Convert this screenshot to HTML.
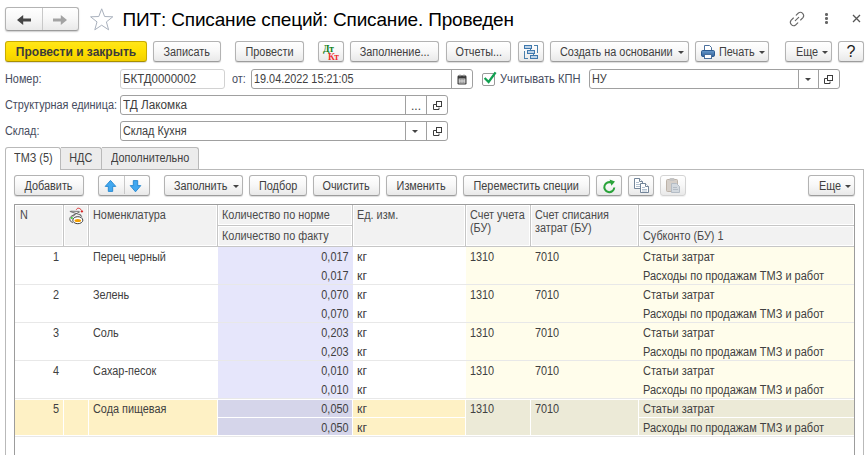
<!DOCTYPE html><html lang="ru"><head><meta charset="utf-8"><title>ПИТ: Списание специй</title><style>
*{box-sizing:border-box;margin:0;padding:0}
html,body{width:868px;height:455px;overflow:hidden;background:#fff}
body{position:relative;font-family:"Liberation Sans",sans-serif;font-size:12px;color:#404040;line-height:14px;white-space:nowrap}
.a{position:absolute}
.btn{position:absolute;height:21px;border:1px solid #b3b3b3;border-bottom-color:#9c9c9c;border-radius:3px;background:linear-gradient(#ffffff 0%,#f8f8f8 45%,#e9e9e9 100%);box-shadow:0 1px 1px rgba(0,0,0,.14);text-align:center;line-height:18px;padding-top:1px}
.ybtn{background:linear-gradient(#ffe61a 0%,#ffdf00 50%,#f2d000 100%);border-color:#c9ab00;border-bottom-color:#a88f00;font-weight:bold;color:#3b3b3b}
.inp{position:absolute;height:20px;border:1px solid #a0a0a0;border-radius:3px;background:#fff;line-height:18px;padding-left:2px}
.inp.ro{border-color:#d2d2d2}
.sep{position:absolute;top:0;bottom:0;width:1px;background:#a0a0a0}
.c,.l,.r{display:inline-block;transform:scaleX(0.905)}
.c{transform-origin:50% 50%}.l{transform-origin:0 50%}.r{transform-origin:100% 50%}
.lbl,.t{position:absolute;line-height:14px;transform:scaleX(0.905);transform-origin:0 0}
.lbl{color:#464c5e}
.t.rr{transform-origin:100% 0;text-align:right}
.arr{position:absolute;width:0;height:0;border-left:3.5px solid transparent;border-right:3.5px solid transparent;border-top:3.5px solid #444;margin-top:1.3px}
.tab{position:absolute;background:#ececec;border:1px solid #b9b9b9;border-bottom:none;text-align:center}
</style></head><body>
<div class="btn" style="left:5px;top:7px;width:74px;height:24px;box-shadow:0 1px 1.5px rgba(0,0,0,.2)"></div>
<div class="a" style="left:42px;top:8px;width:1px;height:22px;background:#c8c8c8"></div>
<svg class="a" style="left:16px;top:12.6px" width="16" height="14" viewBox="0 0 16 14"><path d="M1 7 L7.2 2 V5.6 H15 V8.4 H7.2 V12 Z" fill="#454545"/></svg>
<svg class="a" style="left:52px;top:12.6px" width="16" height="14" viewBox="0 0 16 14"><path d="M15 7 L8.8 2 V5.6 H1 V8.4 H8.8 V12 Z" fill="#a3a3a3"/></svg>
<svg class="a" style="left:89px;top:7px" width="26" height="25" viewBox="0 0 26 25"><path d="M12.7 1.8 L15.6 9.5 L23.8 9.8 L17.4 14.9 L19.6 22.8 L12.7 18.2 L5.8 22.8 L8 14.9 L1.6 9.8 L9.8 9.5 Z" fill="#fff" stroke="#a9b1bd" stroke-width="1"/></svg>
<div class="a" style="left:122.6px;top:8.5px;font-size:19px;line-height:22px;letter-spacing:-0.17px;color:#000">ПИТ: Списание специй: Списание. Проведен</div>
<svg class="a" style="left:786.5px;top:8.6px" width="20" height="20" viewBox="0 0 20 20" fill="none" stroke="#666" stroke-width="1.1" stroke-linecap="round"><path d="M8.3 11.7 L11.7 8.3"/><path d="M9.2 6.2 L11.4 4 a3.3 3.3 0 0 1 4.6 4.6 L13.6 11"/><path d="M10.8 13.8 L8.6 16 a3.3 3.3 0 0 1 -4.6 -4.6 L6.4 9"/></svg>
<div class="a" style="left:825px;top:13px;width:2.7px;height:2.7px;border-radius:50%;background:#666"></div>
<div class="a" style="left:825px;top:17.1px;width:2.7px;height:2.7px;border-radius:50%;background:#666"></div>
<div class="a" style="left:825px;top:21.3px;width:2.7px;height:2.7px;border-radius:50%;background:#666"></div>
<svg class="a" style="left:852px;top:14px" width="9" height="9" viewBox="0 0 9 9" stroke="#555" stroke-width="1.3"><path d="M1 1 L8 8 M8 1 L1 8"/></svg>
<div class="btn ybtn" style="left:5px;top:41px;width:142px;height:21px;line-height:19px">Провести и закрыть</div>
<div class="btn " style="left:153px;top:41px;width:68px;"><span class="c">Записать</span></div>
<div class="btn " style="left:235px;top:41px;width:69px;"><span class="c">Провести</span></div>
<div class="btn " style="left:318px;top:41px;width:26px;"><span style="position:absolute;left:4px;top:1.5px;letter-spacing:-0.3px;font-family:'Liberation Serif',serif;font-weight:bold;font-size:9.5px;color:#12801a;line-height:10px">Дт</span><span style="position:absolute;left:9px;top:10.2px;letter-spacing:-0.5px;font-family:'Liberation Serif',serif;font-weight:bold;font-size:9.5px;color:#f03030;line-height:10px">Кт</span></div>
<div class="btn " style="left:350px;top:41px;width:89px;"><span class="c">Заполнение...</span></div>
<div class="btn " style="left:446px;top:41px;width:65px;"><span class="c">Отчеты...</span></div>
<div class="btn " style="left:518px;top:41px;width:26px;"><svg class="a" style="left:0;top:0" width="24" height="18" viewBox="0 0 24 18" shape-rendering="crispEdges"><g fill="#bdd3e8" stroke="#3f78ad" stroke-width="1"><rect x="5.5" y="3.5" width="7" height="3"/><rect x="8.5" y="8.5" width="7" height="3"/><rect x="11.5" y="13.5" width="7" height="3"/></g><g fill="#4a80ad"><rect x="11" y="7" width="1" height="1"/><rect x="14" y="12" width="1" height="1"/><rect x="15" y="3" width="4" height="1"/><rect x="18" y="3" width="1" height="8"/><rect x="5" y="9" width="1" height="8"/><rect x="5" y="16" width="4" height="1"/></g></svg></div>
<div class="btn" style="left:550px;top:41px;width:139px"><span class="l" style="position:absolute;left:9px;top:1px">Создать на основании</span><i class="arr" style="left:127px;top:8px"></i></div>
<div class="btn" style="left:695px;top:41px;width:74px"><svg class="a" style="left:4px;top:2px" width="16" height="16" viewBox="0 0 16 16"><defs><linearGradient id="pg" x1="0" y1="0" x2="0" y2="1"><stop offset="0" stop-color="#6a9bcc"/><stop offset="1" stop-color="#2f609a"/></linearGradient></defs><path d="M4.5 6.5 V1.5 H9.5 L11.5 3.5 V6.5" fill="#fff" stroke="#4a6f9c"/><rect x="1.5" y="6.5" width="13" height="6" rx="1.2" fill="url(#pg)" stroke="#2b5a90"/><rect x="4.5" y="10.5" width="7" height="4" fill="#fff" stroke="#4a6f9c"/></svg><span class="l" style="position:absolute;left:23px;top:1px">Печать</span><i class="arr" style="left:63px;top:8px"></i></div>
<div class="btn" style="left:785px;top:41px;width:47px"><span class="l" style="position:absolute;left:10px;top:1px">Еще</span><i class="arr" style="left:36px;top:8px"></i></div>
<div class="btn" style="left:838px;top:41px;width:26px"><span style="font-size:16px;color:#1c1c1c;position:relative;top:0.3px">?</span></div>
<div class="lbl" style="left:5px;top:72px">Номер:</div>
<div class="inp ro" style="left:120px;top:69px;width:105px"><span class="l" style="transform:scaleX(.955)">БКТД0000002</span></div>
<div class="lbl" style="left:232px;top:72px">от:</div>
<div class="inp" style="left:251px;top:69px;width:222px"><span class="l">19.04.2022 15:21:05</span><i class="sep" style="left:199px"></i><svg class="a" style="left:205px;top:4px" width="11" height="12" viewBox="0 0 11 12"><rect x="0.5" y="1.5" width="9" height="9" rx="1.2" fill="#3a3a3a"/><rect x="1.7" y="4.6" width="6.6" height="4.8" fill="#fff"/><circle cx="3" cy="1.6" r="0.8" fill="#fff" stroke="#3a3a3a" stroke-width=".5"/><circle cx="7" cy="1.6" r="0.8" fill="#fff" stroke="#3a3a3a" stroke-width=".5"/><g fill="#3a3a3a"><rect x="2.5" y="5.3" width="1.2" height="1.2"/><rect x="4.4" y="5.3" width="1.2" height="1.2"/><rect x="6.3" y="5.3" width="1.2" height="1.2"/><rect x="2.5" y="7.5" width="1.2" height="1.2"/><rect x="4.4" y="7.5" width="1.2" height="1.2"/><rect x="6.3" y="7.5" width="1.2" height="1.2"/></g></svg></div>
<div class="a" style="left:482px;top:73px;width:13px;height:13px;border:1px solid #9a9a9a;border-radius:2px;background:#fff"></div>
<svg class="a" style="left:482px;top:70px" width="16" height="15" viewBox="0 0 16 15" fill="none" stroke="#10a050" stroke-width="2.3"><path d="M2.6 8 L6.6 12 L13.6 2.3"/></svg>
<div class="lbl" style="left:500px;top:72px;transform:scaleX(.928)">Учитывать КПН</div>
<div class="inp" style="left:589px;top:69px;width:251px"><span class="l">НУ</span><i class="sep" style="left:208px"></i><i class="sep" style="left:228px"></i><i class="arr" style="left:215px;top:6.5px"></i><svg class="a" style="left:233px;top:4px" width="11" height="11" viewBox="0 0 11 11" fill="none" stroke="#3c3c3c" stroke-width="1"><rect x="4.5" y="1.5" width="5" height="5"/><path d="M4 4.5 H1.5 V9.5 H7 V7.5"/></svg></div>
<div class="lbl" style="left:5px;top:98px">Структурная единица:</div>
<div class="inp" style="left:120px;top:95px;width:328px"><span class="l" style="transform:scaleX(.98)">ТД Лакомка</span><i class="sep" style="left:284px"></i><i class="sep" style="left:305px"></i><span class="a" style="left:290px;top:1px">...</span><svg class="a" style="left:311px;top:4px" width="11" height="11" viewBox="0 0 11 11" fill="none" stroke="#3c3c3c" stroke-width="1"><rect x="4.5" y="1.5" width="5" height="5"/><path d="M4 4.5 H1.5 V9.5 H7 V7.5"/></svg></div>
<div class="lbl" style="left:5px;top:124px">Склад:</div>
<div class="inp" style="left:120px;top:121px;width:328px"><span class="l">Склад Кухня</span><i class="sep" style="left:284px"></i><i class="sep" style="left:305px"></i><i class="arr" style="left:291px;top:6.5px"></i><svg class="a" style="left:311px;top:4px" width="11" height="11" viewBox="0 0 11 11" fill="none" stroke="#3c3c3c" stroke-width="1"><rect x="4.5" y="1.5" width="5" height="5"/><path d="M4 4.5 H1.5 V9.5 H7 V7.5"/></svg></div>
<div class="a" style="left:5px;top:169px;width:859px;height:300px;border:1px solid #b9b9b9;border-bottom:none"></div>
<div class="tab" style="left:61px;top:147px;width:41px;height:22px;border-left:none;border-radius:0 3px 0 0;line-height:21px"><span class="c">НДС</span></div>
<div class="tab" style="left:102px;top:147px;width:97px;height:22px;border-left:none;border-radius:0 3px 0 0;line-height:21px"><span class="c">Дополнительно</span></div>
<div class="tab" style="left:5px;top:147px;width:56px;height:23px;background:#fff;border-radius:3px 3px 0 0;line-height:21px"><span class="c">ТМЗ (5)</span></div>
<div class="btn " style="left:14px;top:175px;width:70px;"><span class="c">Добавить</span></div>
<div class="btn " style="left:98px;top:175px;width:52px;"></div>
<div class="a" style="left:124px;top:176px;width:1px;height:18px;background:#c8c8c8"></div>
<svg class="a" style="left:98px;top:175px" width="52" height="21" viewBox="98 175 52 21" fill="#41a8f0" stroke="#2286cf" stroke-width="0.9"><path d="M110.5 180.4 L115.8 186.4 H112.7 V191.4 H108.3 V186.4 H105.2 Z"/><path d="M135.5 191.8 L140.8 185.6 H137.7 V180.6 H133.3 V185.6 H130.2 Z"/></svg>
<div class="btn" style="left:164px;top:175px;width:79px"><span class="l" style="position:absolute;left:9px;top:1px">Заполнить</span><i class="arr" style="left:68px;top:8px"></i></div>
<div class="btn " style="left:249px;top:175px;width:58px;"><span class="c">Подбор</span></div>
<div class="btn " style="left:313px;top:175px;width:67px;"><span class="c">Очистить</span></div>
<div class="btn " style="left:386px;top:175px;width:71px;"><span class="c">Изменить</span></div>
<div class="btn " style="left:463px;top:175px;width:127px;"><span class="c">Переместить специи</span></div>
<div class="btn " style="left:596px;top:175px;width:26px;"><svg class="a" style="left:5px;top:3px" width="15" height="15" viewBox="0 0 15 15" fill="none" stroke="#2aa33a" stroke-width="2"><path d="M12.3 8.5 A5 5 0 1 1 9.6 3.7"/><path d="M7.6 0.6 L13 2.6 L9.4 6.8 Z" fill="#2aa33a" stroke="none"/></svg></div>
<div class="btn " style="left:628px;top:175px;width:26px;"><svg class="a" style="left:4px;top:1px" width="17" height="17" viewBox="0 0 17 17" fill="#fff" stroke="#64788f" stroke-width="0.9"><path d="M1.5 1.5 H6.5 L9.5 4.5 V11.5 H1.5 Z"/><path d="M6.5 1.5 V4.5 H9.5" /><path d="M3 5.5 H6 M3 7.5 H8 M3 9.5 H8" stroke="#a9bacb"/><path d="M7.5 6.5 H12.5 L15.5 9.5 V15.5 H7.5 Z"/><path d="M12.5 6.5 V9.5 H15.5"/><path d="M9 10.5 H12 M9 12.5 H14 M9 14 H14" stroke="#a9bacb"/></svg></div>
<div class="btn " style="left:660px;top:175px;width:26px;border-color:#d4d4d4;box-shadow:0 1px 1px rgba(0,0,0,.06)"><svg class="a" style="left:4px;top:1px" width="17" height="17" viewBox="0 0 17 17"><rect x="1.5" y="2.5" width="11" height="12" rx="1" fill="#d5cfc9" stroke="#bcb2a8"/><rect x="4.5" y="1" width="5" height="3" rx="1" fill="#c4c4c4"/><path d="M6.5 6.5 H11.5 L14.5 9.5 V15.5 H6.5 Z" fill="#d3d9df" stroke="#b4bcc5"/><path d="M8 10.5 H12 M8 12.5 H13" stroke="#b4bcc5"/></svg></div>
<div class="btn" style="left:808px;top:175px;width:47px"><span class="l" style="position:absolute;left:10px;top:1px">Еще</span><i class="arr" style="left:36px;top:8px"></i></div>
<div class="a" style="left:14px;top:204px;width:841px;height:260px;border:1px solid #9c9c9c;border-bottom:none;border-radius:1px 1px 0 0"></div>
<div class="a" style="left:15px;top:246px;width:839px;height:1px;background:#c6c6c6"></div>
<div class="a" style="left:63px;top:205px;width:1px;height:41px;background:#c6c6c6"></div>
<div class="a" style="left:16px;top:206px;width:46px;height:39px;background:#f2f2f2"></div>
<div class="a" style="left:88px;top:205px;width:1px;height:41px;background:#c6c6c6"></div>
<div class="a" style="left:65px;top:206px;width:22px;height:39px;background:#f2f2f2"></div>
<div class="a" style="left:217px;top:205px;width:1px;height:41px;background:#c6c6c6"></div>
<div class="a" style="left:90px;top:206px;width:126px;height:39px;background:#f2f2f2"></div>
<div class="a" style="left:352px;top:205px;width:1px;height:41px;background:#c6c6c6"></div>
<div class="a" style="left:219px;top:206px;width:132px;height:18px;background:#f2f2f2"></div>
<div class="a" style="left:218px;top:225px;width:134px;height:1px;background:#c6c6c6"></div>
<div class="a" style="left:219px;top:227px;width:132px;height:18px;background:#f2f2f2"></div>
<div class="a" style="left:465px;top:205px;width:1px;height:41px;background:#c6c6c6"></div>
<div class="a" style="left:354px;top:206px;width:110px;height:39px;background:#f2f2f2"></div>
<div class="a" style="left:530px;top:205px;width:1px;height:41px;background:#c6c6c6"></div>
<div class="a" style="left:467px;top:206px;width:62px;height:39px;background:#f2f2f2"></div>
<div class="a" style="left:638px;top:205px;width:1px;height:41px;background:#c6c6c6"></div>
<div class="a" style="left:532px;top:206px;width:105px;height:39px;background:#f2f2f2"></div>
<div class="a" style="left:640px;top:206px;width:213px;height:18px;background:#f2f2f2"></div>
<div class="a" style="left:639px;top:225px;width:215px;height:1px;background:#c6c6c6"></div>
<div class="a" style="left:640px;top:227px;width:213px;height:18px;background:#f2f2f2"></div>
<div class="t" style="left:20px;top:208px;color:#4a4a4a">N</div>
<div class="t" style="left:93px;top:208px;color:#4a4a4a">Номенклатура</div>
<div class="t" style="left:222px;top:208px;color:#4a4a4a">Количество по норме</div>
<div class="t" style="left:222px;top:229px;color:#4a4a4a">Количество по факту</div>
<div class="t" style="left:357px;top:208px;color:#4a4a4a">Ед. изм.</div>
<div class="t" style="left:470px;top:208px;color:#4a4a4a">Счет учета</div>
<div class="t" style="left:470px;top:221px;color:#4a4a4a">(БУ)</div>
<div class="t" style="left:535px;top:208px;color:#4a4a4a">Счет списания</div>
<div class="t" style="left:535px;top:221px;color:#4a4a4a">затрат (БУ)</div>
<div class="t" style="left:643px;top:229px;color:#4a4a4a">Субконто (БУ) 1</div>
<svg class="a" style="left:64px;top:204px" width="24" height="24" viewBox="0 0 24 24" fill="none" stroke="#2b2b2b" stroke-width="0.9"><path d="M9.2 11.5 C5.4 12 4.2 17 8.8 18.7" stroke="#444"/><path d="M11.2 10.2 L9 12.6 M15.6 10.4 L18.2 12.8" stroke="#333" stroke-width="0.8"/><ellipse cx="13.8" cy="16.2" rx="5" ry="3.5" fill="#fff"/><path d="M5.8 7.4 L17.2 11.2 M15.8 7.9 L8.7 11.3 M6.6 7.2 L15.3 7.4" stroke="#555" stroke-width="0.8"/><ellipse cx="13.8" cy="16.5" rx="3.3" ry="1.6" fill="#f5a000" stroke="none"/><circle cx="7.9" cy="14" r="1" fill="#2fd02f" stroke="none"/><path d="M12.4 5.6 C13 3.7 16 3.6 17.4 6.3" stroke="#d61a1a" stroke-width="0.9"/><path d="M17.9 6.2 V8.6 M16.7 7.4 H19.1" stroke="#d61a1a" stroke-width="1"/></svg>
<div class="a" style="left:218px;top:247px;width:135px;height:37px;background:#e6e6fb"></div>
<div class="a" style="left:466px;top:247px;width:388px;height:37px;background:#fffdeb"></div>
<div class="a" style="left:15px;top:284px;width:839px;height:1px;background:#e8e8e8"></div>
<div class="t rr" style="left:15px;top:250px;width:44px">1</div>
<div class="t" style="left:93px;top:250px">Перец черный</div>
<div class="t rr" style="left:218px;top:250px;width:130.5px">0,017</div>
<div class="t" style="left:356.5px;top:250px;transform:scaleX(1.04)">кг</div>
<div class="t rr" style="left:218px;top:269px;width:130.5px">0,017</div>
<div class="t" style="left:356.5px;top:269px;transform:scaleX(1.04)">кг</div>
<div class="t" style="left:470px;top:250px">1310</div>
<div class="t" style="left:535px;top:250px">7010</div>
<div class="t" style="left:643px;top:250px;transform:scaleX(.916)">Статьи затрат</div>
<div class="t" style="left:643px;top:269px;transform:scaleX(.916)">Расходы по продажам ТМЗ и работ</div>
<div class="a" style="left:218px;top:285px;width:135px;height:37px;background:#e6e6fb"></div>
<div class="a" style="left:466px;top:285px;width:388px;height:37px;background:#fffdeb"></div>
<div class="a" style="left:15px;top:322px;width:839px;height:1px;background:#e8e8e8"></div>
<div class="t rr" style="left:15px;top:288px;width:44px">2</div>
<div class="t" style="left:93px;top:288px">Зелень</div>
<div class="t rr" style="left:218px;top:288px;width:130.5px">0,070</div>
<div class="t" style="left:356.5px;top:288px;transform:scaleX(1.04)">кг</div>
<div class="t rr" style="left:218px;top:307px;width:130.5px">0,070</div>
<div class="t" style="left:356.5px;top:307px;transform:scaleX(1.04)">кг</div>
<div class="t" style="left:470px;top:288px">1310</div>
<div class="t" style="left:535px;top:288px">7010</div>
<div class="t" style="left:643px;top:288px;transform:scaleX(.916)">Статьи затрат</div>
<div class="t" style="left:643px;top:307px;transform:scaleX(.916)">Расходы по продажам ТМЗ и работ</div>
<div class="a" style="left:218px;top:323px;width:135px;height:37px;background:#e6e6fb"></div>
<div class="a" style="left:466px;top:323px;width:388px;height:37px;background:#fffdeb"></div>
<div class="a" style="left:15px;top:360px;width:839px;height:1px;background:#e8e8e8"></div>
<div class="t rr" style="left:15px;top:326px;width:44px">3</div>
<div class="t" style="left:93px;top:326px">Соль</div>
<div class="t rr" style="left:218px;top:326px;width:130.5px">0,203</div>
<div class="t" style="left:356.5px;top:326px;transform:scaleX(1.04)">кг</div>
<div class="t rr" style="left:218px;top:345px;width:130.5px">0,203</div>
<div class="t" style="left:356.5px;top:345px;transform:scaleX(1.04)">кг</div>
<div class="t" style="left:470px;top:326px">1310</div>
<div class="t" style="left:535px;top:326px">7010</div>
<div class="t" style="left:643px;top:326px;transform:scaleX(.916)">Статьи затрат</div>
<div class="t" style="left:643px;top:345px;transform:scaleX(.916)">Расходы по продажам ТМЗ и работ</div>
<div class="a" style="left:218px;top:361px;width:135px;height:37px;background:#e6e6fb"></div>
<div class="a" style="left:466px;top:361px;width:388px;height:37px;background:#fffdeb"></div>
<div class="a" style="left:15px;top:398px;width:839px;height:1px;background:#e8e8e8"></div>
<div class="t rr" style="left:15px;top:364px;width:44px">4</div>
<div class="t" style="left:93px;top:364px">Сахар-песок</div>
<div class="t rr" style="left:218px;top:364px;width:130.5px">0,010</div>
<div class="t" style="left:356.5px;top:364px;transform:scaleX(1.04)">кг</div>
<div class="t rr" style="left:218px;top:383px;width:130.5px">0,010</div>
<div class="t" style="left:356.5px;top:383px;transform:scaleX(1.04)">кг</div>
<div class="t" style="left:470px;top:364px">1310</div>
<div class="t" style="left:535px;top:364px">7010</div>
<div class="t" style="left:643px;top:364px;transform:scaleX(.916)">Статьи затрат</div>
<div class="t" style="left:643px;top:383px;transform:scaleX(.916)">Расходы по продажам ТМЗ и работ</div>
<div class="a" style="left:15px;top:400px;width:839px;height:35px;background:#fef1c5"></div>
<div class="a" style="left:218px;top:400px;width:134px;height:35px;background:#d5d5ea"></div>
<div class="a" style="left:466px;top:400px;width:388px;height:35px;background:#ecead7"></div>
<div class="a" style="left:63px;top:399px;width:1px;height:37px;background:#fff"></div>
<div class="a" style="left:88px;top:399px;width:1px;height:37px;background:#fff"></div>
<div class="a" style="left:217px;top:399px;width:1px;height:37px;background:#fff"></div>
<div class="a" style="left:352px;top:399px;width:1px;height:37px;background:#fff"></div>
<div class="a" style="left:465px;top:399px;width:1px;height:37px;background:#fff"></div>
<div class="a" style="left:530px;top:399px;width:1px;height:37px;background:#fff"></div>
<div class="a" style="left:638px;top:399px;width:1px;height:37px;background:#fff"></div>
<div class="a" style="left:218px;top:417px;width:247px;height:1px;background:#fff"></div>
<div class="a" style="left:639px;top:417px;width:215px;height:1px;background:#fff"></div>
<div class="a" style="left:15px;top:436px;width:839px;height:1px;background:#e8e8e8"></div>
<div class="t rr" style="left:15px;top:402px;width:44px">5</div>
<div class="t" style="left:93px;top:402px">Сода пищевая</div>
<div class="t rr" style="left:218px;top:402px;width:130.5px">0,050</div>
<div class="t" style="left:356.5px;top:402px;transform:scaleX(1.04)">кг</div>
<div class="t rr" style="left:218px;top:421px;width:130.5px">0,050</div>
<div class="t" style="left:356.5px;top:421px;transform:scaleX(1.04)">кг</div>
<div class="t" style="left:470px;top:402px">1310</div>
<div class="t" style="left:535px;top:402px">7010</div>
<div class="t" style="left:643px;top:402px;transform:scaleX(.916)">Статьи затрат</div>
<div class="t" style="left:643px;top:421px;transform:scaleX(.916)">Расходы по продажам ТМЗ и работ</div>
</body></html>
